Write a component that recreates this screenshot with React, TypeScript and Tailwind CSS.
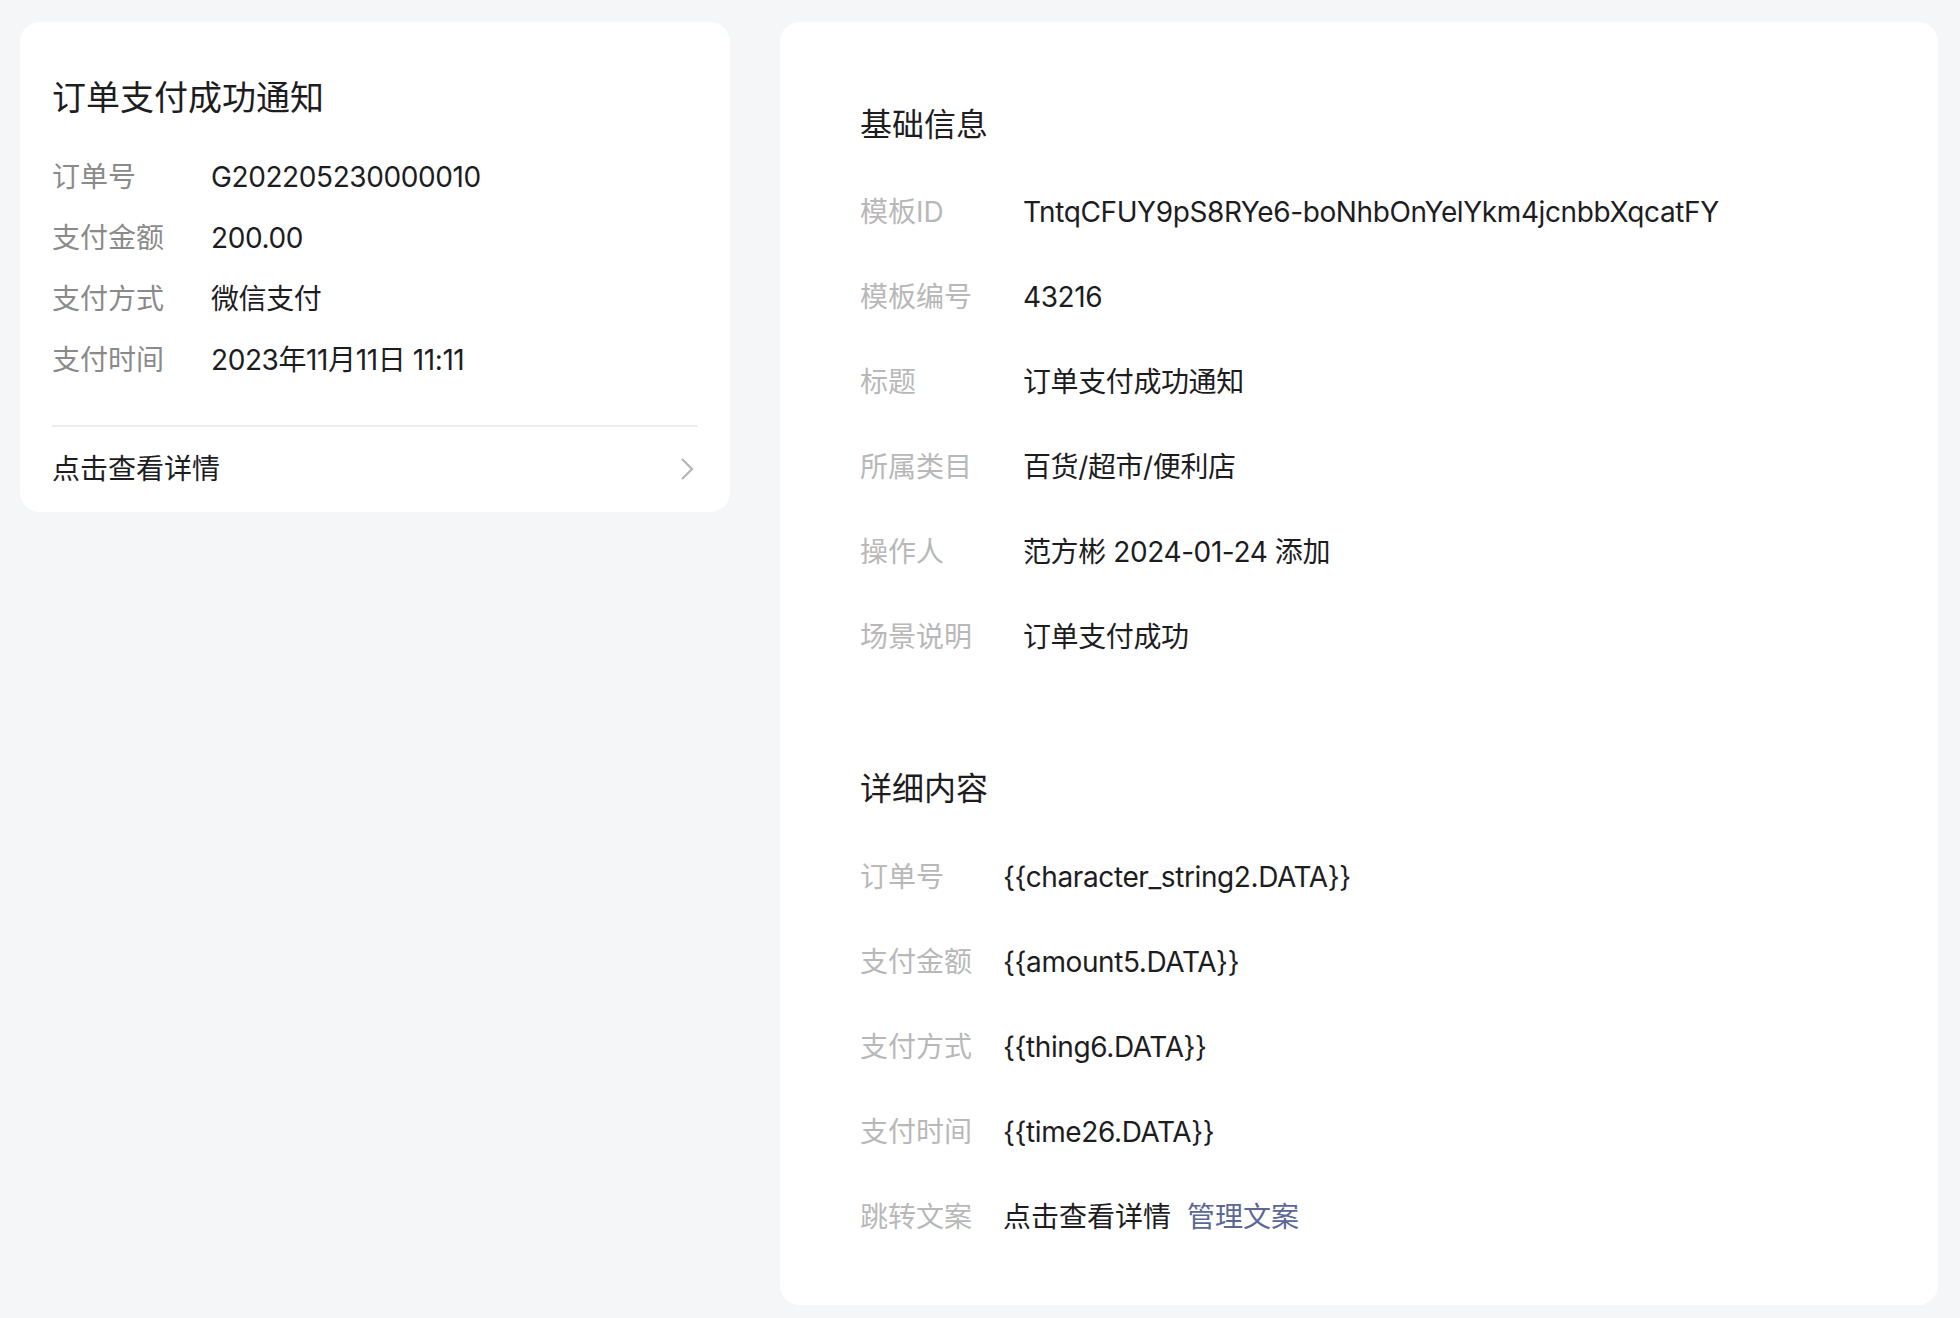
const font = "font-['Inter','Noto_Sans_CJK_SC',sans-serif]";

const preview = [
  { label: "订单号", value: "G202205230000010" },
  { label: "支付金额", value: "200.00" },
  { label: "支付方式", value: "微信支付" },
  { label: "支付时间", value: "2023年11月11日 11:11" },
];

const basics = [
  { label: "模板ID", value: "TntqCFUY9pS8RYe6-boNhbOnYelYkm4jcnbbXqcatFY" },
  { label: "模板编号", value: "43216" },
  { label: "标题", value: "订单支付成功通知" },
  { label: "所属类目", value: "百货/超市/便利店" },
  { label: "操作人", value: "范方彬 2024-01-24 添加" },
  { label: "场景说明", value: "订单支付成功" },
];

const details = [
  { label: "订单号", value: "{{character_string2.DATA}}" },
  { label: "支付金额", value: "{{amount5.DATA}}" },
  { label: "支付方式", value: "{{thing6.DATA}}" },
  { label: "支付时间", value: "{{time26.DATA}}" },
];

export default function App() {
  return (
    <div className={`min-h-screen bg-[#f5f6f8] flex items-start gap-[50px] pl-[20px] pr-[22px] pt-[22px] ${font}`}>
      <div className="w-[710px] shrink-0 bg-white rounded-[20px] px-[32px] pt-[54px] pb-[23px]">
        <div className="text-[34px] leading-[44px] text-[#1d1d1f]">订单支付成功通知</div>
        <div className="mt-[37px] flex flex-col gap-[21px]">
          {preview.map((row) => (
            <div key={row.label} className="flex items-center h-[40px] text-[28px]">
              <span className="w-[159px] shrink-0 text-[#8a8a8a]">{row.label}</span>
              <span className="text-[#1d1d1f] tracking-[-0.4px]">{row.value}</span>
            </div>
          ))}
        </div>
        <div className="mt-[45px] border-t-2 border-[#ececec] pt-[22px] flex items-center justify-between">
          <span className="text-[28px] leading-[40px] text-[#1d1d1f]">点击查看详情</span>
          <svg width="14" height="24" viewBox="0 0 14 24" className="mr-[4px]">
            <polyline points="2,2 12,12 2,22" fill="none" stroke="#b5b5b5" strokeWidth="2.2" />
          </svg>
        </div>
      </div>

      <div className="flex-1 bg-white rounded-[20px] pl-[80px] pt-[81px] pb-[68px]">
        <div className="text-[32px] leading-[44px] text-[#1d1d1f]">基础信息</div>
        <div className="mt-[45px] flex flex-col gap-[45px]">
          {basics.map((row) => (
            <div key={row.label} className="flex items-center h-[40px] text-[28px]">
              <span className="w-[163px] shrink-0 text-[#b8b8b8]">{row.label}</span>
              <span className="text-[#1d1d1f] tracking-[-0.4px]">{row.value}</span>
            </div>
          ))}
        </div>

        <div className="mt-[110px] text-[32px] leading-[44px] text-[#1d1d1f]">详细内容</div>
        <div className="mt-[46px] flex flex-col gap-[45px]">
          {details.map((row) => (
            <div key={row.label} className="flex items-center h-[40px] text-[28px]">
              <span className="w-[143px] shrink-0 text-[#b8b8b8]">{row.label}</span>
              <span className="text-[#1d1d1f] tracking-[-0.4px]">{row.value}</span>
            </div>
          ))}
          <div className="flex items-center h-[40px] text-[28px]">
            <span className="w-[143px] shrink-0 text-[#b8b8b8]">跳转文案</span>
            <span className="text-[#1d1d1f]">点击查看详情</span>
            <a className="ml-[16px] text-[#5b6795] cursor-pointer">管理文案</a>
          </div>
        </div>
      </div>
    </div>
  );
}
